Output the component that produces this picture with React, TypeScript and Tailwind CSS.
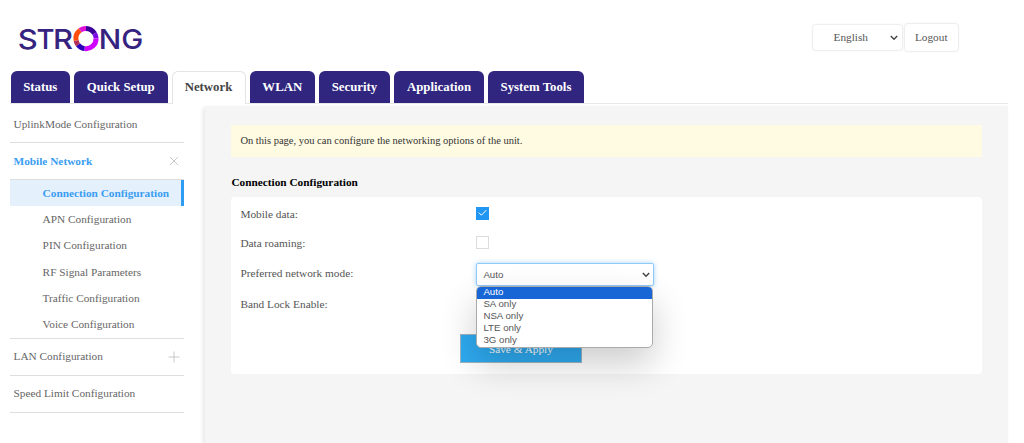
import { useState } from "react";

/* ---------- Data ---------- */
const tabs = [
  { name: "Status", width: "w-[59.5px]" },
  { name: "Quick Setup", width: "w-[93.5px]" },
  { name: "Network", width: "w-[74px]" },
  { name: "WLAN", width: "w-[65.5px]" },
  { name: "Security", width: "w-[71px]" },
  { name: "Application", width: "w-[90px]" },
  { name: "System Tools", width: "w-[96px]" },
];

const mobileItems = [
  "Connection Configuration",
  "APN Configuration",
  "PIN Configuration",
  "RF Signal Parameters",
  "Traffic Configuration",
  "Voice Configuration",
];

const modes = ["Auto", "SA only", "NSA only", "LTE only", "3G only"];

/* ---------- Small pieces ---------- */
function Logo() {
  return (
    <svg width="132" height="44" viewBox="-3 -8 132 44" role="img" aria-label="STRONG">
      <g fill="#35237f" fontFamily="Inter, sans-serif" fontWeight="500" fontSize="27.5">
        <text x="-1.2" y="23.6" textLength="20" lengthAdjust="spacingAndGlyphs">S</text>
        <text x="17.6" y="23.6" textLength="18" lengthAdjust="spacingAndGlyphs">T</text>
        <text x="34" y="23.6" textLength="20" lengthAdjust="spacingAndGlyphs">R</text>
        <text x="79.8" y="23.6" textLength="22.5" lengthAdjust="spacingAndGlyphs">N</text>
        <text x="102.2" y="23.6" textLength="22" lengthAdjust="spacingAndGlyphs">G</text>
      </g>
      <g fill="none" strokeWidth="5">
        <path d="M67 3.4 A10.1 10.1 0 0 1 75.6 8.5" stroke="#3a0099" />
        <path d="M75.6 8.5 A10.1 10.1 0 0 1 77.1 13.5" stroke="#7a0ae6" />
        <path d="M77.1 13.5 A10.1 10.1 0 0 1 65.5 23.6" stroke="#cf00ff" />
        <path d="M65.5 23.6 A10.1 10.1 0 0 1 59 19.8" stroke="#2a00b8" />
        <path d="M59 19.8 A10.1 10.1 0 0 1 57.1 15.5" stroke="#b0305a" />
        <path d="M57.1 15.5 A10.1 10.1 0 0 1 61.2 5.3" stroke="#ff4d0d" />
        <path d="M61.2 5.3 A10.1 10.1 0 0 1 67 3.4" stroke="#e010d8" />
      </g>
    </svg>
  );
}

function Chevron({ className }: { className?: string }) {
  return (
    <svg width="8" height="6" viewBox="0 0 8 6" fill="none" stroke="#444" strokeWidth="1.4" className={className}>
      <path d="M0.8 1 L4 4.3 L7.2 1" />
    </svg>
  );
}

function CheckBox({ checked, onChange }: { checked: boolean; onChange: () => void }) {
  return (
    <button
      onClick={onChange}
      className={`flex h-[13px] w-[13px] items-center justify-center border ${checked ? "border-[#2196f3] bg-[#2196f3]" : "border-[#dcdcdc] bg-white"}`}
    >
      {checked && (
        <svg width="11" height="11" viewBox="0 0 11 11" fill="none" stroke="#fff" strokeWidth="1">
          <path d="M1.8 4.6 L4.4 7.2 L9.3 2.2" />
        </svg>
      )}
    </button>
  );
}

/* ---------- Sidebar ---------- */
function Sidebar() {
  const [current, setCurrent] = useState(mobileItems[0]);

  return (
    <nav className="w-[174px] shrink-0 text-[#666]">
      <div className="flex h-[38px] items-center border-b border-[#dedede] pt-px pl-[3.5px]">UplinkMode Configuration</div>
      <div className="flex h-[37px] items-center justify-between border-b border-[#dedede] pr-[5px] pl-[3.5px] font-bold text-[#3a9df2]">
        Mobile Network
        <svg width="10" height="10" viewBox="0 0 10 10" stroke="#c8c8c8" strokeWidth="1">
          <path d="M1 1 L9 9 M9 1 L1 9" />
        </svg>
      </div>
      <ul className="border-b border-[#dedede]">
        {mobileItems.map((item) => (
          <li
            key={item}
            onClick={() => setCurrent(item)}
            className={`flex h-[26.3px] items-center pl-[32.6px] ${item === current ? "border-r-[3px] border-[#2f9cf4] bg-[#e4f1fc] font-bold text-[#3a9df2]" : ""}`}
          >
            {item}
          </li>
        ))}
      </ul>
      <div className="flex h-[37px] items-center justify-between border-b border-[#dedede] pr-[4px] pl-[3.5px]">
        LAN Configuration
        <svg width="12" height="12" viewBox="0 0 12 12" stroke="#c8c8c8" strokeWidth="1">
          <path d="M6 0.5 V11.5 M0.5 6 H11.5" />
        </svg>
      </div>
      <div className="flex h-[37px] items-center border-b border-[#dedede] pl-[3.5px]">Speed Limit Configuration</div>
    </nav>
  );
}

/* ---------- Network mode select ---------- */
function ModeSelect() {
  const [mode, setMode] = useState(modes[0]);

  return (
    <div className="relative w-[178px] font-['Liberation_Sans',sans-serif] text-[9.7px] text-[#555]">
      <div className="flex h-[23px] items-center justify-between rounded-xs border border-[#90caf9] bg-white pt-px pr-[3px] pl-[6.5px] shadow-[0_0_5px_rgba(33,150,243,0.4)]">
        {mode}
        <Chevron />
      </div>
      <ul className="absolute top-[23px] left-[0.5px] z-10 w-[177px] overflow-hidden rounded-[5px] border border-[#aaa] bg-white shadow-[0_16px_36px_rgba(0,0,0,0.2)]">
        {modes.map((m) => (
          <li
            key={m}
            onClick={() => setMode(m)}
            className={`flex h-3 items-center pb-px pl-[6px] ${m === mode ? "bg-[#1866d6] text-white" : ""}`}
          >
            {m}
          </li>
        ))}
      </ul>
    </div>
  );
}

/* ---------- Main Component ---------- */
export default function App() {
  const [tab, setTab] = useState("Network");
  const [mobileData, setMobileData] = useState(true);
  const [roaming, setRoaming] = useState(false);
  const [bandLock, setBandLock] = useState(false);

  return (
    <main className="h-[443px] w-[1024px] overflow-hidden bg-white pr-4 pl-[10px] font-['Liberation_Serif',serif] text-[11.3px]">
      <header className="flex h-[71px] items-start justify-between pr-[49px] pl-[6px]">
        <div className="pt-[17px]">
          <Logo />
        </div>
        <div className="flex items-center gap-px pt-[23px] text-[#555]">
          <button className="flex h-[27px] w-[91px] items-center justify-between rounded-sm border border-[#eee] pr-[4px] pl-[21px] shadow-[0_0_2px_rgba(0,0,0,0.06)]">
            English
            <Chevron />
          </button>
          <button className="h-[29px] w-[55.5px] rounded-sm border border-[#eee] shadow-[0_0_2px_rgba(0,0,0,0.06)]">Logout</button>
        </div>
      </header>

      <div className="flex h-[33px] gap-1 border-b border-[#e8e8e8] pl-[0.5px]">
        {tabs.map((t) => (
          <button
            key={t.name}
            onClick={() => setTab(t.name)}
            className={`${t.width} shrink-0 rounded-t-md text-[12.8px] font-bold ${t.name === tab ? "h-[33px] border border-b-0 border-[#e4e4e4] bg-white text-[#444]" : "h-8 bg-[#30257f] pt-px text-white"}`}
          >
            {t.name}
          </button>
        ))}
      </div>

      <div className="flex pt-px">
        <Sidebar />
        <section className="mt-px ml-[21px] h-[337px] grow bg-[#f5f5f5] pt-[19px] pr-[26px] pl-[26.4px] shadow-[-2px_2px_4px_rgba(0,0,0,0.1)]">
          <p className="flex h-8 items-center bg-[#fffbe2] pl-[9px] text-[10.5px] text-[#333]">
            On this page, you can configure the networking options of the unit.
          </p>
          <h2 className="mt-4 flex h-[18px] items-center font-bold text-black">Connection Configuration</h2>
          <div className="mt-[6px] h-[177px] rounded bg-white pl-[9px] text-[#555]">
            <div className="flex h-[33px] items-center">
              <span className="w-[235.5px] pt-px">Mobile data:</span>
              <CheckBox checked={mobileData} onChange={() => setMobileData(!mobileData)} />
            </div>
            <div className="flex h-[25px] items-center">
              <span className="w-[235.5px] pt-px">Data roaming:</span>
              <CheckBox checked={roaming} onChange={() => setRoaming(!roaming)} />
            </div>
            <div className="flex h-[39px] items-center">
              <span className="w-[235.5px] pb-[2px]">Preferred network mode:</span>
              <ModeSelect />
            </div>
            <div className="flex h-[22px] items-center">
              <span className="w-[235.5px] pb-[2px]">Band Lock Enable:</span>
              <CheckBox checked={bandLock} onChange={() => setBandLock(!bandLock)} />
            </div>
            <button className="mt-[18px] ml-[219.5px] h-[29px] w-[122px] border border-[#9fb4c0] bg-[#2eaaf0] pt-px text-white">
              Save &amp; Apply
            </button>
          </div>
        </section>
      </div>
    </main>
  );
}
